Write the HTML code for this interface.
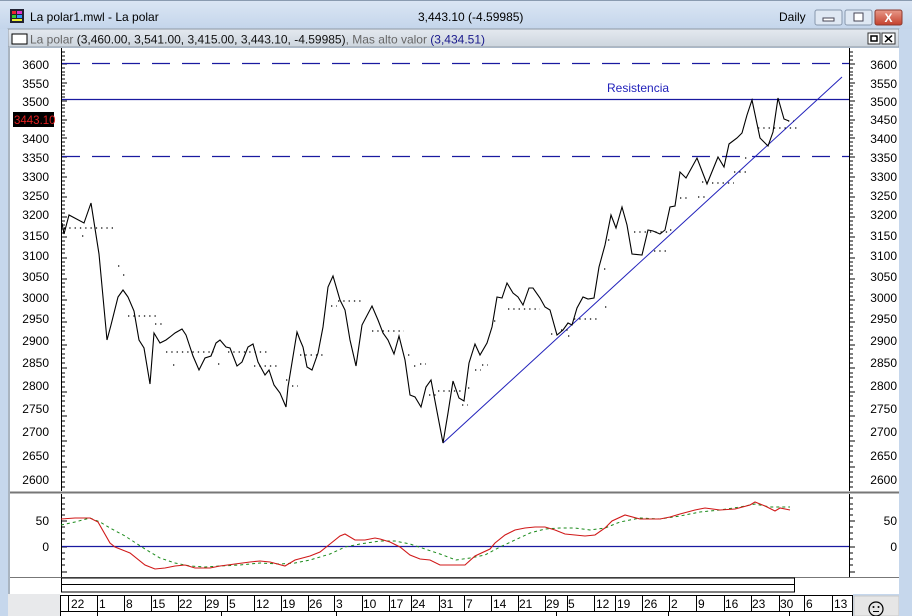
<!DOCTYPE html>
<html><head><meta charset="utf-8"><style>
html,body{margin:0;padding:0;width:912px;height:616px;overflow:hidden;background:#c9d9ec;font-family:"Liberation Sans",sans-serif}
</style></head><body>
<svg width="912" height="616" xmlns="http://www.w3.org/2000/svg" font-family="Liberation Sans, sans-serif">
<defs>
<linearGradient id="tb" x1="0" y1="0" x2="0" y2="1"><stop offset="0" stop-color="#dbe6f4"/><stop offset="1" stop-color="#c2d4ea"/></linearGradient>
<linearGradient id="sb" x1="0" y1="0" x2="0" y2="1"><stop offset="0" stop-color="#e4e9ef"/><stop offset="1" stop-color="#cdd5de"/></linearGradient>
<linearGradient id="rb" x1="0" y1="0" x2="0" y2="1"><stop offset="0" stop-color="#e89a8a"/><stop offset="1" stop-color="#c4402c"/></linearGradient>
</defs>
<rect width="912" height="616" fill="#c6d7ec"/>
<rect x="0" y="0" width="912" height="31" fill="url(#tb)"/>
<rect x="0" y="0" width="912" height="1" fill="#8a9bb0"/>
<!-- app icon -->
<rect x="10" y="9" width="14" height="14" fill="#223" />
<rect x="12" y="11" width="4" height="3" fill="#e23"/><rect x="17" y="11" width="5" height="3" fill="#d3c"/>
<rect x="12" y="15" width="4" height="3" fill="#3c3"/><rect x="17" y="15" width="5" height="3" fill="#39f"/>
<rect x="12" y="19" width="10" height="2" fill="#ee3"/>
<text x="30" y="21" font-size="12" fill="#000">La polar1.mwl - La polar</text>
<text x="418" y="21" font-size="12" fill="#000">3,443.10 (-4.59985)</text>
<text x="779" y="21" font-size="12" fill="#000">Daily</text>
<rect x="815" y="10" width="27" height="15" rx="2" fill="#dfe8f3" stroke="#8797ad"/>
<rect x="823" y="18" width="11" height="3" fill="#fff" stroke="#445"/>
<rect x="845" y="10" width="27" height="15" rx="2" fill="#dfe8f3" stroke="#8797ad"/>
<rect x="854" y="13" width="9" height="8" fill="#fff" stroke="#445"/>
<rect x="875" y="10" width="27" height="15" rx="2" fill="url(#rb)" stroke="#8d3a2e"/>
<text x="888.5" y="22" font-size="12" font-weight="bold" fill="#fff" text-anchor="middle">X</text>
<!-- subtitle bar -->
<rect x="8" y="29" width="891" height="18" fill="url(#sb)" stroke="#8e98a4"/>
<rect x="12" y="34" width="15" height="10" fill="#fff" stroke="#000"/>
<text x="30" y="43.5" font-size="12" fill="#666">La polar <tspan fill="#111">(3,460.00, 3,541.00, 3,415.00, 3,443.10, -4.59985)</tspan>, Mas  alto valor <tspan fill="#1a1a8c">(3,434.51)</tspan></text>
<rect x="868" y="33" width="12" height="11" fill="#fff" stroke="#333"/><rect x="871" y="36" width="6" height="5" fill="none" stroke="#000" stroke-width="1.5"/>
<rect x="882" y="33" width="13" height="11" fill="#fff" stroke="#333"/>
<path d="M885 35.5 L892 42 M892 35.5 L885 42" stroke="#000" stroke-width="1.5"/>
<!-- chart area -->
<rect x="10" y="48" width="889" height="546" fill="#fff"/>
<rect x="8" y="47" width="2" height="547" fill="#a9b4c0"/>
<!-- separators -->
<line x1="10" y1="492.5" x2="899" y2="492.5" stroke="#777" stroke-width="2"/>
<line x1="10" y1="577.5" x2="899" y2="577.5" stroke="#777" stroke-width="1"/>
<!-- axes -->
<line x1="61.5" y1="48" x2="61.5" y2="491" stroke="#000"/>
<line x1="849.5" y1="48" x2="849.5" y2="491" stroke="#000"/>
<line x1="61.5" y1="494" x2="61.5" y2="577" stroke="#000"/>
<line x1="849.5" y1="494" x2="849.5" y2="577" stroke="#000"/>
<g id="ticks" stroke="#000">
<path d="M61 52h4M61 56h4M61 60h4M61 64h6M61 68h4M61 72h4M61 75h4M61 79h4M61 83h6M61 86h4M61 90h4M61 94h4M61 97h4M61 101h6M61 105h4M61 108h4M61 112h4M61 116h4M61 120h6M61 123h4M61 127h4M61 131h4M61 135h4M61 138h6M61 142h4M61 146h4M61 150h4M61 154h4M61 157h6M61 161h4M61 165h4M61 169h4M61 173h4M61 177h6M61 181h4M61 185h4M61 189h4M61 193h4M61 197h6M61 201h4M61 205h4M61 209h4M61 213h4M61 217h6M61 221h4M61 225h4M61 229h4M61 233h4M61 237h6M61 241h4M61 245h4M61 249h4M61 253h4M61 258h6M61 262h4M61 266h4M61 270h4M61 274h4M61 279h6M61 283h4M61 287h4M61 292h4M61 296h4M61 300h6M61 305h4M61 309h4M61 313h4M61 318h4M61 322h6M61 327h4M61 331h4M61 336h4M61 340h4M61 345h6M61 349h4M61 354h4M61 358h4M61 363h4M61 368h6M61 373h4M61 377h4M61 382h4M61 387h4M61 392h6M61 396h4M61 401h4M61 406h4M61 411h4M61 416h6M61 421h4M61 426h4M61 431h4M61 436h4M61 441h6M61 446h4M61 451h4M61 456h4M61 462h4M61 467h6M61 472h4M61 477h4M61 482h4M61 487h4"/>
</g>
<use href="#ticks" transform="translate(788,0)"/>
<path d="M61 498h4M61 504h4M61 509h4M61 515h4M61 521h6M61 527h4M61 533h4M61 539h4M61 547h6M61 553h4M61 559h4M61 565h4M61 572h6M849 498h4M849 504h4M849 509h4M849 515h4M849 521h6M849 527h4M849 533h4M849 539h4M849 547h6M849 553h4M849 559h4M849 565h4M849 572h6" stroke="#000"/>
<!-- labels -->
<g font-size="12" fill="#000" text-anchor="end">
<text x="49" y="69">3600</text><text x="49" y="88">3550</text><text x="49" y="106">3500</text>
<text x="49" y="143">3400</text><text x="49" y="162">3350</text><text x="49" y="181">3300</text>
<text x="49" y="200">3250</text><text x="49" y="219">3200</text><text x="49" y="240">3150</text>
<text x="49" y="260">3100</text><text x="49" y="281">3050</text><text x="49" y="302">3000</text>
<text x="49" y="323">2950</text><text x="49" y="345">2900</text><text x="49" y="367">2850</text>
<text x="49" y="390">2800</text><text x="49" y="413">2750</text><text x="49" y="436">2700</text>
<text x="49" y="460">2650</text><text x="49" y="484">2600</text>
<text x="49" y="525">50</text><text x="49" y="551">0</text>
</g>
<g font-size="12" fill="#000" text-anchor="end">
<text x="897" y="69">3600</text><text x="897" y="88">3550</text><text x="897" y="106">3500</text><text x="897" y="124">3450</text>
<text x="897" y="143">3400</text><text x="897" y="162">3350</text><text x="897" y="181">3300</text>
<text x="897" y="200">3250</text><text x="897" y="219">3200</text><text x="897" y="240">3150</text>
<text x="897" y="260">3100</text><text x="897" y="281">3050</text><text x="897" y="302">3000</text>
<text x="897" y="323">2950</text><text x="897" y="345">2900</text><text x="897" y="367">2850</text>
<text x="897" y="390">2800</text><text x="897" y="413">2750</text><text x="897" y="436">2700</text>
<text x="897" y="460">2650</text><text x="897" y="484">2600</text>
<text x="897" y="525">50</text><text x="897" y="551">0</text>
</g>
<rect x="13" y="112" width="41" height="15" fill="#000"/>
<text x="14" y="124" font-size="11.5" fill="#e02020">3443.10</text>
<!-- horizontal lines -->
<line x1="62" y1="63.5" x2="849" y2="63.5" stroke="#1a1aa0" stroke-dasharray="18,12" stroke-width="1.3"/>
<line x1="62" y1="99.5" x2="849" y2="99.5" stroke="#1a1aa0" stroke-width="1.3"/>
<line x1="62" y1="156.5" x2="849" y2="156.5" stroke="#1a1aa0" stroke-dasharray="18,12" stroke-width="1.3"/>
<text x="607" y="92" font-size="12" fill="#2222bb">Resistencia</text>
<line x1="443" y1="443" x2="842" y2="77" stroke="#2222bb" stroke-width="1"/>
<!-- dotted series -->
<g stroke="#000" stroke-width="1.3" stroke-dasharray="1.3,4" fill="none">
<path d="M64 228h52M82 236h4M118 266h2M123 275h2M128 316h28M155 324h8M166 352h48M218 364h4M173 365h4M228 352h42M254 366h26M286 380h4M292 386h6M300 355h24M331 306h6M338 301h26M372 331h32M408 355h4M414 366h4M420 364h6M429 395h8M438 391h24M462 405h6M468 388h4M475 370h6M482 365h6M494 321h4M508 309h32M551 334h4M561 330h8M568 336h4M574 319h24M604 269h4M605 307h2M608 240h4M634 232h34M654 251h12M670 230h4M680 198h10M698 197h8M702 182h6M712 183h22M734 172h12M745 158h4M758 128h40M788 121h6"/>
</g>
<!-- price line -->
<polyline fill="none" stroke="#000" stroke-width="1.1" points="62,223 64,234 69,215 84,223 91,203 99,254 107,340 111,325 118,297 123,290 128,297 134,311 139,340 144,348 150,384 154,333 160,343 166,340 170,337 175,333 182,329 186,335 193,356 199,370 205,358 211,356 216,343 220,340 226,347 230,348 237,366 242,362 248,347 253,344 258,362 265,375 269,370 274,385 280,393 286,407 288,387 297,332 300,340 303,347 307,367 312,370 318,353 323,327 328,287 333,276 340,300 345,310 350,340 356,366 362,325 372,306 378,320 383,333 388,340 394,354 399,336 405,360 410,395 415,397 421,407 426,387 431,380 443,443 448,413 453,381 459,398 464,401 469,363 475,344 480,355 487,343 492,327 497,297 502,298 507,283 513,293 518,297 523,305 529,288 533,288 540,298 545,307 550,310 557,335 563,330 568,323 572,325 577,308 583,297 588,299 594,298 599,267 605,245 611,215 616,228 622,207 627,225 632,254 642,255 648,230 653,231 660,234 665,230 670,207 675,206 680,172 686,178 697,158 707,184 718,157 724,167 729,144 737,138 742,133 747,115 752,100 760,138 768,146 773,132 778,98 784,119 789,121"/>
<!-- lower panel -->
<line x1="62" y1="546.5" x2="849" y2="546.5" stroke="#1a1aa0" stroke-width="1.3"/>
<polyline fill="none" stroke="#1a8a1a" stroke-width="1" stroke-dasharray="3,3" points="61,525 75,522 90,518 100,522 110,528 125,536 145,549 160,558 175,563 190,566 205,567 220,566 240,565 260,563 280,564 295,563 310,560 330,554 345,547 360,544 380,541 395,541 410,544 425,549 440,554 456,560 470,558 485,555 500,547 515,540 530,533 545,529 560,528 575,528 590,530 605,528 620,522 640,518 660,519 680,516 700,512 720,510 740,507 755,504 770,507 790,507"/>
<polyline fill="none" stroke="#d01818" stroke-width="1.1" points="61,519 75,518 90,518 98,522 110,543 115,547 130,553 145,565 155,569 165,568 175,566 185,565 195,568 210,568 220,566 235,564 250,562 260,561 270,562 285,566 295,560 310,556 320,552 330,544 340,536 345,534 355,540 365,540 375,538 380,539 390,542 400,547 410,555 420,559 430,560 440,565 456,565 465,565 475,556 490,549 495,543 505,535 515,530 525,528 535,527 545,527 555,530 565,534 575,535 585,536 595,535 605,528 612,521 625,515 640,519 650,519 660,519 670,517 680,514 695,510 705,508 720,510 735,509 750,505 755,502 765,506 775,511 780,508 790,510"/>
<!-- bottom scroll/rows -->
<rect x="61.5" y="578" width="733" height="14" fill="#fff" stroke="#000"/>
<line x1="62" y1="584.5" x2="794" y2="584.5" stroke="#000"/>
<rect x="0" y="594" width="60" height="22" fill="#e8e9eb"/>
<rect x="60" y="594" width="793" height="22" fill="#fff"/>
<line x1="60" y1="595.5" x2="853" y2="595.5" stroke="#000"/>
<line x1="60" y1="611.5" x2="853" y2="611.5" stroke="#000"/>
<path stroke="#000" d="M60.5 595v21M68.5 595v17M97.5 595v17M124.5 595v17M151.5 595v17M178.5 595v17M205.5 595v17M227.5 595v17M254.5 595v17M281.5 595v17M308.5 595v17M334.5 595v17M362.5 595v17M389.5 595v17M411.5 595v17M439.5 595v17M464.5 595v17M491.5 595v17M518.5 595v17M545.5 595v17M567.5 595v17M594.5 595v17M615.5 595v17M642.5 595v17M669.5 595v17M696.5 595v17M724.5 595v17M751.5 595v17M779.5 595v17M804.5 595v17M832.5 595v17M852.5 595v21M97.5 612v4M221.5 612v4M336.5 612v4M556.5 612v4M668.5 612v4M789.5 612v4"/>
<g font-size="12" fill="#000">
<text x="71" y="608">22</text><text x="99" y="608">1</text><text x="126" y="608">8</text><text x="152" y="608">15</text><text x="179" y="608">22</text><text x="206" y="608">29</text><text x="229" y="608">5</text><text x="256" y="608">12</text><text x="282" y="608">19</text><text x="309" y="608">26</text><text x="336" y="608">3</text><text x="363" y="608">10</text><text x="390" y="608">17</text><text x="412" y="608">24</text><text x="440" y="608">31</text><text x="466" y="608">7</text><text x="493" y="608">14</text><text x="519" y="608">21</text><text x="546" y="608">29</text><text x="568" y="608">5</text><text x="596" y="608">12</text><text x="617" y="608">19</text><text x="644" y="608">26</text><text x="671" y="608">2</text><text x="698" y="608">9</text><text x="725" y="608">16</text><text x="752" y="608">23</text><text x="780" y="608">30</text><text x="806" y="608">6</text><text x="834" y="608">13</text>
</g>
<rect x="854" y="596" width="45" height="20" fill="#e6e6e6" stroke="#c8c8c8"/>
<circle cx="876" cy="609" r="7" fill="none" stroke="#000" stroke-width="1.2"/>
<circle cx="873.5" cy="607" r="1" fill="#000"/><circle cx="878.5" cy="607" r="1" fill="#000"/>
<line x1="873" y1="611.5" x2="879" y2="611.5" stroke="#000"/>
<rect x="899" y="29" width="13" height="587" fill="#c6d7ec"/>
<rect x="0" y="29" width="8" height="587" fill="#c6d7ec"/>
</svg>
</body></html>
